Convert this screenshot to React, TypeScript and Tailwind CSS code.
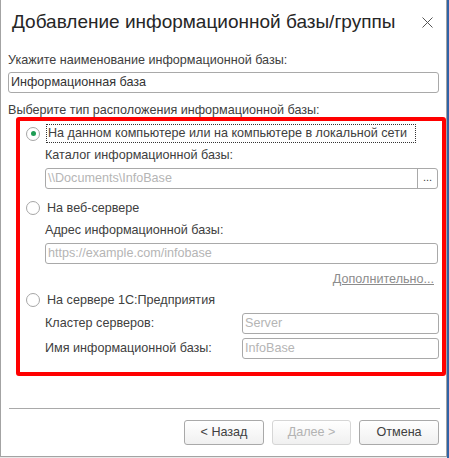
import React from "react";

function Radio({ checked }: { checked?: boolean }) {
  return (
    <span className="flex h-[14px] w-[14px] shrink-0 items-center justify-center rounded-full border border-[#a6a6a6] bg-white">
      {checked && <span className="h-[5px] w-[5px] rounded-full bg-[#1f9d55]" />}
    </span>
  );
}

function Field({ placeholder, className, button }: { placeholder: string; className: string; button?: boolean }) {
  return (
    <div className={"flex h-[21px] items-stretch rounded-[3px] border border-[#a9a9a9] bg-white " + className}>
      <span className="flex flex-1 items-center pl-[2px] text-[#b5b5b5]">{placeholder}</span>
      {button && (
        <span className="flex w-[20px] items-center justify-center border-l border-[#a9a9a9] pb-[2px] text-[11px] text-[#404040]">...</span>
      )}
    </div>
  );
}

function Btn({ label, disabled }: { label: string; disabled?: boolean }) {
  return (
    <button
      className={
        "flex h-[25px] items-center justify-center rounded-[3px] border bg-gradient-to-b from-white to-[#f0f0f0] text-[12.6px] " +
        (disabled ? "w-[79px] border-[#d6d6d6] text-[#b3b3b3]" : "w-[80px] border-[#a9a9a9] text-[#404040]")
      }
    >
      {label}
    </button>
  );
}

export default function App() {
  return (
    <div className="flex h-[458px] w-[449px] whitespace-nowrap bg-[#e9e9e9] font-['Liberation_Sans',Arial,sans-serif] text-[12.6px]">
      <div className="flex h-[457px] w-[447px] flex-col border-x border-b border-[#a3a3a3] bg-white">
        <div className="flex h-[44px] items-center justify-between pl-[11px] pr-[13px]">
          <span className="text-[19px] text-[#262626]">Добавление информационной базы/группы</span>
          <svg width="11" height="11" viewBox="0 0 11 11" className="mt-[1px]">
            <path d="M0.5 0.5L10.5 10.5M10.5 0.5L0.5 10.5" stroke="#555" strokeWidth="1" />
          </svg>
        </div>

        <div className="mt-[8px] flex h-[16px] items-center pl-[7px] text-[#404040]">
          Укажите наименование информационной базы:
        </div>
        <div className="ml-[7px] mt-[4px] flex h-[21px] w-[431px] items-center rounded-[3px] border border-[#a9a9a9] pl-[2px] text-[#333]">
          Информационная база
        </div>
        <div className="mt-[9px] flex h-[16px] items-center pl-[7px] text-[#404040]">
          Выберите тип расположения информационной базы:
        </div>

        <div className="-mt-[1px] ml-[15px] flex w-[430px] flex-col rounded-[3px] border-[4px] border-[#ff0000] pb-[13px] pl-[25px] pr-[3px] pt-[3px] text-[#404040]">
          <div className="-ml-[19px] flex h-[19px] items-center gap-[6px]">
            <Radio checked />
            <span className="flex h-[19px] w-[370px] items-center border border-dotted border-[#333] pl-[1px]">
              На данном компьютере или на компьютере в локальной сети
            </span>
          </div>
          <div className="mt-[4px] flex h-[16px] items-center">Каталог информационной базы:</div>
          <Field placeholder="\\Documents\InfoBase" className="mt-[5px] w-[393px]" button />

          <div className="-ml-[19px] mt-[10px] flex h-[18px] items-center gap-[7px]">
            <Radio />
            <span>На веб-сервере</span>
          </div>
          <div className="mt-[5px] flex h-[16px] items-center">Адрес информационной базы:</div>
          <Field placeholder="https://example.com/infobase" className="mt-[5px] w-[393px]" />
          <div className="mt-[7px] flex h-[16px] w-[393px] items-center justify-end pr-[4px] text-[#8c8c8c] underline">
            Дополнительно...
          </div>

          <div className="-ml-[19px] mt-[4px] flex h-[18px] items-center gap-[7px]">
            <Radio />
            <span>На сервере 1С:Предприятия</span>
          </div>
          <div className="mt-[4px] flex h-[21px] items-center justify-between">
            <span>Кластер серверов:</span>
            <Field placeholder="Server" className="w-[197px]" />
          </div>
          <div className="mt-[4px] flex h-[21px] items-center justify-between">
            <span>Имя информационной базы:</span>
            <Field placeholder="InfoBase" className="w-[197px]" />
          </div>
        </div>

        <div className="ml-[8px] mt-[32px] h-px w-[431px] bg-[#a9a9a9]" />
        <div className="mt-[11px] flex justify-end gap-[8px] pr-[7px]">
          <Btn label="< Назад" />
          <Btn label="Далее >" disabled />
          <Btn label="Отмена" />
        </div>
      </div>
      <div className="h-full w-[2px] bg-[#2f63a6]" />
    </div>
  );
}
